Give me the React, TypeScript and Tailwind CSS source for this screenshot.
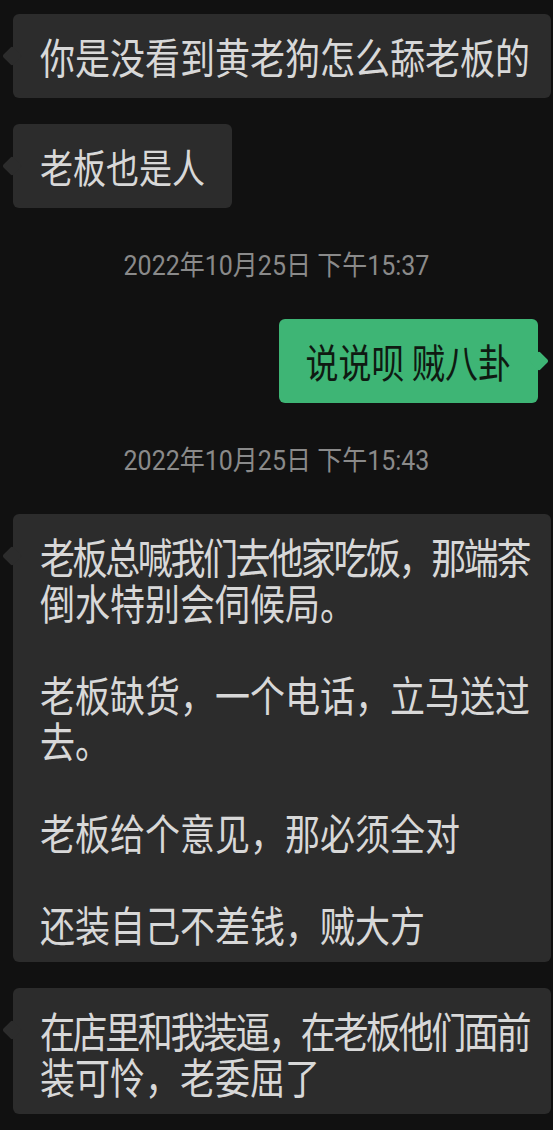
import React from "react";

type Side = "left" | "right";

const Line = ({ text, tight }: { text: string; tight?: boolean }) => (
    <div className={`flex h-[46px] items-center whitespace-nowrap ${tight ? "tracking-[-2.4px]" : ""}`}>
        <span className="inline-block scale-y-[1.2] leading-[38px]">{text}</span>
    </div>
);

const Bubble = ({
    side,
    lines,
    wide,
    tightFirst,
    size = "text-[35px]",
}: {
    side: Side;
    lines: string[];
    wide?: boolean;
    tightFirst?: boolean;
    size?: string;
}) => {
    const left = side === "left";
    const multi = lines.length > 1;
    return (
        <div
            className={`relative rounded-[6px] px-[27px] pt-[19px] ${size} ${multi ? "pb-[15px]" : "pb-[19px]"} ${
                left ? "ml-[13px] bg-[#2c2c2c] text-[#d8d8d8]" : "mr-[15px] ml-auto bg-[#3eb575] text-[#0f1a12]"
            } ${wide ? "w-[538px]" : "w-fit"}`}
        >
            {/* tail */}
            <div
                className={`absolute top-[35px] h-[14px] w-[14px] rotate-45 rounded-[2px] ${
                    left ? "left-[-8px] bg-[#2c2c2c]" : "right-[-8px] bg-[#3eb575]"
                }`}
            />
            <div className="relative">
                {lines.map((l, i) => (
                    <Line key={i} text={l} tight={tightFirst && i === 0} />
                ))}
            </div>
        </div>
    );
};

const Stamp = ({ text }: { text: string }) => (
    <div className="mt-[43px] mb-[38px] flex h-[30px] items-center justify-center text-[25px] text-[#8a8a8a] [font-family:Roboto,'Noto_Sans_CJK_SC',sans-serif]">
        <span className="inline-block scale-y-[1.1] leading-[26px]">{text}</span>
    </div>
);

export default function App() {
    return (
        <div className="h-[1130px] w-[553px] overflow-hidden bg-[#111111] pt-[14px] [font-family:'Noto_Sans_CJK_SC','Noto_Sans',sans-serif]">
            <div className="flex flex-col">
                <Bubble side="left" wide lines={["你是没看到黄老狗怎么舔老板的"]} />
                <div className="h-[26px]" />
                <Bubble side="left" size="text-[33px]" lines={["老板也是人"]} />
                <Stamp text="2022年10月25日 下午15:37" />
                <Bubble side="right" size="text-[33px]" lines={["说说呗 贼八卦"]} />
                <Stamp text="2022年10月25日 下午15:43" />
                <Bubble
                    side="left"
                    wide
                    tightFirst
                    lines={[
                        "老板总喊我们去他家吃饭，那端茶",
                        "倒水特别会伺候局。",
                        "",
                        "老板缺货，一个电话，立马送过",
                        "去。",
                        "",
                        "老板给个意见，那必须全对",
                        "",
                        "还装自己不差钱，贼大方",
                    ]}
                />
                <div className="h-[26px]" />
                <Bubble
                    side="left"
                    wide
                    tightFirst
                    lines={["在店里和我装逼，在老板他们面前", "装可怜，老委屈了"]}
                />
            </div>
        </div>
    );
}
